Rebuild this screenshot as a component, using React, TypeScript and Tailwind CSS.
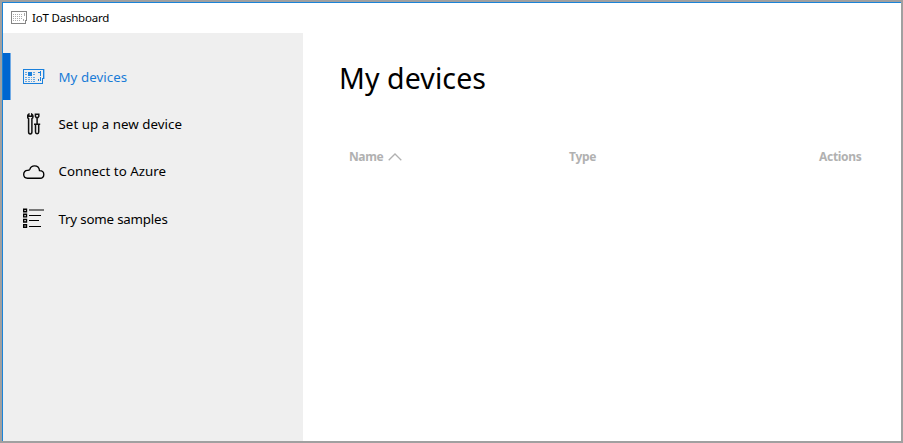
import type { ReactNode } from "react";

function BoardIcon() {
  return (
    <svg width="22" height="16" viewBox="0 0 22 16" fill="none" shapeRendering="crispEdges">
      <path d="M.5 .5H20.5V9.5H19.5V14.5H.5Z" stroke="#1a80dc" />
      <path d="M21.5 0V10" stroke="#9cc8ef" />
      <rect x="5" y="3" width="4" height="4" fill="#1a80dc" />
      <g fill="#1a80dc" fillOpacity=".65">
        {[3, 5, 8, 10, 12].map((y) => (
          <path key={y} d={`M2 ${y}h2v1h-2zM10 ${y}h2v1h-2z`} />
        ))}
        {[8, 10, 12].map((y) => (
          <path key={y} d={`M5 ${y}h2v1h-2zM8 ${y}h1v1h-1z`} />
        ))}
      </g>
      <path d="M17 2h1v5h-1zM15 3h2v1h-2zM17 8h1v4h-1zM15 10h1v2h-1z" fill="#1a80dc" />
    </svg>
  );
}

function ToolsIcon() {
  return (
    <svg width="14" height="22" viewBox="0 0 14 22" fill="none" stroke="#111" strokeWidth="1.5">
      <path d="M1.8 1.1C.2 2 .2 4.8 1.6 5.7V19C1.6 21.5 4.9 21.5 4.9 19V5.7C6.4 4.8 6.4 2 4.8 1.1V3.2H1.8Z" />
      <path d="M8.4 1.3H11.8V3.3L11 4.6H9.2L8.4 3.3ZM10.1 4.4V11M7 11.3H13.2M8.5 11.5V19C8.5 21.2 11.7 21.2 11.7 19V11.5" />
    </svg>
  );
}

function CloudIcon() {
  return (
    <svg className="relative top-[0.8px]" width="22" height="14" viewBox="0 0 22 14" fill="none" stroke="#000" strokeWidth="1.35">
      <path d="M4.5 13.2C2.2 13.2.7 11.5.7 9.3C.7 7.1 2.3 5.4 4.3 5.4C5.3 5.4 6.3 5.5 6.9 4.2C7.6 2.1 9.3 .9 11.5 .9C14.2 .9 16.2 2.6 16.5 5.6C19 5.7 20.8 7.1 20.8 9.4C20.8 11.6 19.2 13.2 17 13.2Z" />
    </svg>
  );
}

function ListIcon() {
  return (
    <svg width="22" height="21" viewBox="0 0 22 21" fill="none">
      <path
        stroke="#000"
        strokeWidth="1.4"
        d="M.7 1.2h2.8v2.6h-2.8zM.7 6.3h2.8v2.6h-2.8zM.7 11.4h2.8v2.6h-2.8zM.7 16.7h2.8v2.6h-2.8z"
      />
      <g shapeRendering="crispEdges">
        <path d="M6 1h15v2h-15z" fill="#777" />
        <path d="M6 7h12v1h-12zM6 12h10v1h-10zM6 18h12v1h-12z" fill="#000" />
      </g>
    </svg>
  );
}

function TitleIcon() {
  return (
    <svg width="16" height="14" viewBox="0 0 16 14" fill="none" shapeRendering="crispEdges">
      <path d="M.5 .5H15.5V9.5H14.5V12.5H.5Z" stroke="#858585" />
      <path d="M2 3.5H11M2 5.5H11M2 7.5H11M2 9.5H9" stroke="#aaa" strokeDasharray="1 1" />
      <path d="M13.5 2V5M12.5 8V10" stroke="#aaa" />
    </svg>
  );
}

type NavItemProps = { icon: ReactNode; label: string; tracking: string; active?: boolean };

function NavItem({ icon, label, tracking, active = false }: NavItemProps) {
  return (
    <a className={`flex h-[47.4px] items-center ${active ? "text-[#1a7cd7]" : "text-black"}`}>
      <span className={`h-[47px] w-[7px] ${active ? "bg-[#0066d0]" : ""}`} />
      <span className={`h-[47px] w-px ${active ? "bg-[#70aae5]" : ""}`} />
      <span className="ml-[12px] flex w-[22px] justify-center">{icon}</span>
      <span className={`ml-[13.5px] text-[13.3px] leading-5 whitespace-nowrap ${tracking}`}>{label}</span>
    </a>
  );
}

export default function App() {
  return (
    <div className="h-[443px] w-[903px] border-2 border-[#a0a0a0] bg-white font-['Noto_Sans',sans-serif] text-black">
      <div className="flex h-full flex-col border-t border-l border-[#1a83d8]">
        <header className="flex h-[30px] shrink-0 items-center pl-2">
          <TitleIcon />
          <h2 className="ml-[5px] text-[11.5px] leading-4 tracking-[-0.2px]">IoT Dashboard</h2>
        </header>
        <div className="flex min-h-0 flex-1">
          <nav className="w-[300px] shrink-0 bg-[#efefef] pt-5">
            <NavItem active icon={<BoardIcon />} label="My devices" tracking="tracking-[0.05px]" />
            <NavItem icon={<ToolsIcon />} label="Set up a new device" tracking="tracking-[0.04px]" />
            <NavItem icon={<CloudIcon />} label="Connect to Azure" tracking="tracking-[0.04px]" />
            <NavItem icon={<ListIcon />} label="Try some samples" tracking="tracking-[-0.18px]" />
          </nav>
          <main className="flex-1 pt-[25px] pl-9">
            <h1 className="text-[28.5px] leading-10 tracking-[0.1px]">My devices</h1>
            <div className="mt-[49px] flex pl-[10px] text-[12px] leading-5 font-bold text-[#b1b1b1]">
              <div className="flex w-[220px] items-center">
                <span className="tracking-[-0.4px]">Name</span>
                <svg className="ml-[4.5px]" width="14" height="8" viewBox="0 0 14 8" fill="none" stroke="#b1b1b1" strokeWidth="1.3">
                  <path d="M.7 7.3L7 1L13.3 7.3" />
                </svg>
              </div>
              <span className="w-[250px] tracking-[-0.3px]">Type</span>
              <span className="tracking-[-0.3px]">Actions</span>
            </div>
          </main>
        </div>
      </div>
    </div>
  );
}
